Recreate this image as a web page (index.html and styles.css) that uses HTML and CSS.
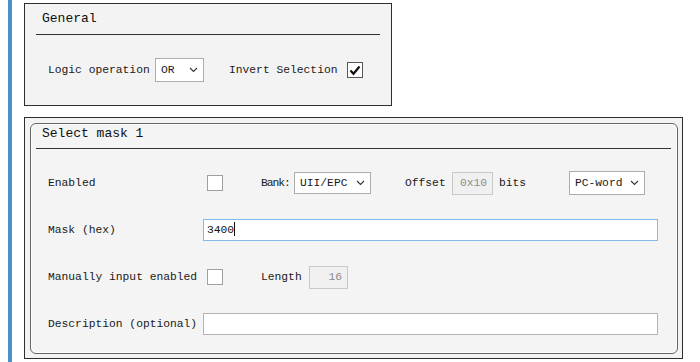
FILE: index.html
```html
<!DOCTYPE html>
<html>
<head>
    <title>Select mask</title>
    <link rel="stylesheet" href="styles.css">
</head>
<body>
    <div class="page">
        <div class="rail"></div>
        <div class="panels">
            <!-- General -->
            <section class="panel panel-general">
                <div class="title title-general">General</div>
                <div class="row row-general">
                    <span class="label lbl-op">Logic operation</span>
                    <div class="select sel-op">
                        <span>OR</span>
                        <svg class="chev" width="9" height="6" viewBox="0 0 9 6"><path d="M1 1 L4.5 4.5 L8 1" fill="none" stroke="#333" stroke-width="1.1"/></svg>
                    </div>
                    <span class="label lbl-invert">Invert Selection</span>
                    <div class="check checked">
                        <svg width="12" height="11" viewBox="0 0 12 11"><path d="M1.5 5.5 L4.5 8.8 L10.5 1.5" fill="none" stroke="#111" stroke-width="2.2"/></svg>
                    </div>
                </div>
            </section>

            <!-- Select mask 1 -->
            <section class="panel panel-mask">
                <div class="group">
                    <div class="title title-mask">Select mask 1</div>
                    <div class="rows">
                        <div class="row">
                            <span class="label lbl-col">Enabled</span>
                            <div class="check"></div>
                            <span class="label lbl-bank">Bank:</span>
                            <div class="select sel-bank">
                                <span>UII/EPC</span>
                                <svg class="chev" width="9" height="6" viewBox="0 0 9 6"><path d="M1 1 L4.5 4.5 L8 1" fill="none" stroke="#333" stroke-width="1.1"/></svg>
                            </div>
                            <span class="label lbl-offset">Offset</span>
                            <div class="field disabled fld-offset">0x10</div>
                            <span class="label lbl-bits">bits</span>
                            <div class="select sel-word">
                                <span>PC-word</span>
                                <svg class="chev" width="9" height="6" viewBox="0 0 9 6"><path d="M1 1 L4.5 4.5 L8 1" fill="none" stroke="#333" stroke-width="1.1"/></svg>
                            </div>
                        </div>
                        <div class="row">
                            <span class="label lbl-col">Mask (hex)</span>
                            <div class="field wide focused">3400<span class="caret"></span></div>
                        </div>
                        <div class="row">
                            <span class="label lbl-col">Manually input enabled</span>
                            <div class="check"></div>
                            <span class="label lbl-length">Length</span>
                            <div class="field disabled fld-length">16</div>
                        </div>
                        <div class="row">
                            <span class="label lbl-col">Description (optional)</span>
                            <div class="field wide"></div>
                        </div>
                    </div>
                </div>
            </section>
        </div>
    </div>
</body>
</html>
```

FILE: styles.css
```css
body {
    margin: 0;
    background: #ffffff;
    font-family: "Liberation Mono", "DejaVu Sans Mono", monospace;
    font-size: 11.3px;
    color: #1a1a1a;
}
.page {
    display: flex;
    height: 362px;
    padding-left: 8px;
}
.rail {
    width: 4px;
    background-color: #4a92c6;
    margin-right: 12px;
}
.panels {
    display: flex;
    flex-direction: column;
    padding-top: 3px;
}
.panel {
    box-sizing: border-box;
    border: 1px solid #2e2e2e;
    background-color: #f3f3f3;
}
.panel-general {
    width: 368px;
    height: 103px;
    padding: 0 11px;
}
.panel-mask {
    width: 659px;
    height: 242px;
    margin-top: 11px;
    padding: 5px 4px 4px 5px;
}
.group {
    height: 100%;
    box-sizing: border-box;
    border: 1px solid #666;
    border-radius: 6px;
    box-shadow: inset 0 0 0 1px #fdfdfd;
    background-color: #f4f4f4;
}
.title {
    font-size: 13px;
    color: #0e0e0e;
    padding-left: 6px;
    border-bottom: 1px solid #333;
}
.title-general {
    height: 30px;
    line-height: 30px;
}
.title-mask {
    height: 20px;
    line-height: 20px;
    padding-bottom: 4px;
    margin: 0 6px 0 5px;
}
.row {
    display: flex;
    align-items: center;
    height: 24px;
    padding-left: 12px;
}
.row-general {
    margin-top: 23px;
}
.rows {
    display: flex;
    flex-direction: column;
    gap: 23px;
    margin-top: 22px;
    margin-left: 5px;
}
.label {
    white-space: nowrap;
    flex-shrink: 0;
}
.lbl-op { width: 107px; }
.lbl-invert { width: 118px; margin-left: 25px; }
.lbl-col { width: 155px; }
.lbl-bank { width: 33px; margin-left: 38px; letter-spacing: -1px; }
.lbl-offset { width: 47px; margin-left: 34px; }
.lbl-bits { width: 70px; margin-left: 6px; }
.lbl-length { width: 48px; margin-left: 38px; }

.select {
    box-sizing: border-box;
    display: flex;
    align-items: center;
    justify-content: space-between;
    border: 1px solid #adadad;
    background: #fff;
    padding: 0 5px 0 5px;
    flex-shrink: 0;
}
.sel-op { width: 49px; height: 24px; }
.sel-bank { width: 77px; height: 22px; }
.sel-word { width: 76px; height: 24px; }
.chev {
    display: block;
}

.check {
    box-sizing: border-box;
    width: 16px;
    height: 16px;
    margin-left: 4px;
    border: 1px solid #a0a0a0;
    background: #fff;
    flex-shrink: 0;
    display: flex;
    align-items: center;
    justify-content: center;
}
.checked {
    margin-left: 0;
    border-color: #555;
}

.field {
    box-sizing: border-box;
    height: 22px;
    line-height: 20px;
    border: 1px solid #b4b4b4;
    background: #fff;
    padding: 0 3px;
    flex-shrink: 0;
}
.wide {
    width: 455px;
}
.focused {
    border-color: #86b9e6;
    color: #111;
}
.caret {
    display: inline-block;
    width: 1px;
    height: 14px;
    background: #111;
    vertical-align: -3px;
}
.disabled {
    height: 23px;
    line-height: 21px;
    background: #f0f0f0;
    border-color: #c9c9c9;
    color: #8c8c8c;
    text-align: right;
    padding-right: 5px;
}
.fld-offset { width: 41px; }
.fld-length { width: 39px; }
```
